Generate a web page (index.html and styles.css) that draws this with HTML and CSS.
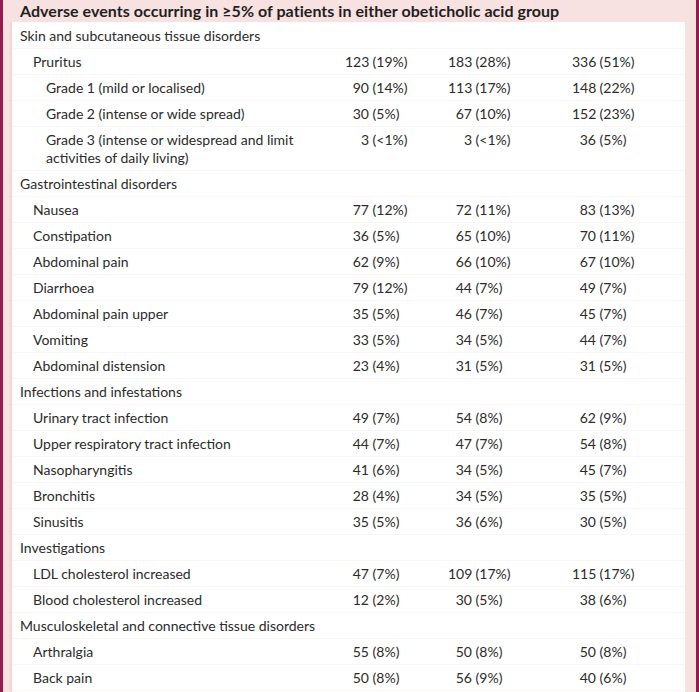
FILE: index.html
```html
<!DOCTYPE html>
<html lang="en">
<head>
    <meta charset="UTF-8">
    <meta name="viewport" content="width=device-width, initial-scale=1.0">
    <title>Adverse events</title>
    <link rel="stylesheet" href="styles.css">
</head>
<body>
    <div class="frame">
        <h1 class="caption">Adverse events occurring in ≥5% of patients in either obeticholic acid group</h1>
        <div class="panel">
            <table class="events">
                <colgroup>
                    <col class="col-label">
                    <col class="col-a">
                    <col class="col-b">
                    <col class="col-c">
                </colgroup>
                <tbody>
                    <tr class="group"><td colspan="4">Skin and subcutaneous tissue disorders</td></tr>
                    <tr>
                        <td class="lvl1">Pruritus</td>
                        <td><span class="n">123</span> (19%)</td>
                        <td><span class="n">183</span> (28%)</td>
                        <td><span class="n">336</span> (51%)</td>
                    </tr>
                    <tr>
                        <td class="lvl2">Grade 1 (mild or localised)</td>
                        <td><span class="n">90</span> (14%)</td>
                        <td><span class="n">113</span> (17%)</td>
                        <td><span class="n">148</span> (22%)</td>
                    </tr>
                    <tr>
                        <td class="lvl2">Grade 2 (intense or wide spread)</td>
                        <td><span class="n">30</span> (5%)</td>
                        <td><span class="n">67</span> (10%)</td>
                        <td><span class="n">152</span> (23%)</td>
                    </tr>
                    <tr>
                        <td class="lvl2">Grade 3 (intense or widespread and limit<br>activities of daily living)</td>
                        <td><span class="n">3</span> (&lt;1%)</td>
                        <td><span class="n">3</span> (&lt;1%)</td>
                        <td><span class="n">36</span> (5%)</td>
                    </tr>

                    <tr class="group"><td colspan="4">Gastrointestinal disorders</td></tr>
                    <tr>
                        <td class="lvl1">Nausea</td>
                        <td><span class="n">77</span> (12%)</td>
                        <td><span class="n">72</span> (11%)</td>
                        <td><span class="n">83</span> (13%)</td>
                    </tr>
                    <tr>
                        <td class="lvl1">Constipation</td>
                        <td><span class="n">36</span> (5%)</td>
                        <td><span class="n">65</span> (10%)</td>
                        <td><span class="n">70</span> (11%)</td>
                    </tr>
                    <tr>
                        <td class="lvl1">Abdominal pain</td>
                        <td><span class="n">62</span> (9%)</td>
                        <td><span class="n">66</span> (10%)</td>
                        <td><span class="n">67</span> (10%)</td>
                    </tr>
                    <tr>
                        <td class="lvl1">Diarrhoea</td>
                        <td><span class="n">79</span> (12%)</td>
                        <td><span class="n">44</span> (7%)</td>
                        <td><span class="n">49</span> (7%)</td>
                    </tr>
                    <tr>
                        <td class="lvl1">Abdominal pain upper</td>
                        <td><span class="n">35</span> (5%)</td>
                        <td><span class="n">46</span> (7%)</td>
                        <td><span class="n">45</span> (7%)</td>
                    </tr>
                    <tr>
                        <td class="lvl1">Vomiting</td>
                        <td><span class="n">33</span> (5%)</td>
                        <td><span class="n">34</span> (5%)</td>
                        <td><span class="n">44</span> (7%)</td>
                    </tr>
                    <tr>
                        <td class="lvl1">Abdominal distension</td>
                        <td><span class="n">23</span> (4%)</td>
                        <td><span class="n">31</span> (5%)</td>
                        <td><span class="n">31</span> (5%)</td>
                    </tr>

                    <tr class="group"><td colspan="4">Infections and infestations</td></tr>
                    <tr>
                        <td class="lvl1">Urinary tract infection</td>
                        <td><span class="n">49</span> (7%)</td>
                        <td><span class="n">54</span> (8%)</td>
                        <td><span class="n">62</span> (9%)</td>
                    </tr>
                    <tr>
                        <td class="lvl1">Upper respiratory tract infection</td>
                        <td><span class="n">44</span> (7%)</td>
                        <td><span class="n">47</span> (7%)</td>
                        <td><span class="n">54</span> (8%)</td>
                    </tr>
                    <tr>
                        <td class="lvl1">Nasopharyngitis</td>
                        <td><span class="n">41</span> (6%)</td>
                        <td><span class="n">34</span> (5%)</td>
                        <td><span class="n">45</span> (7%)</td>
                    </tr>
                    <tr>
                        <td class="lvl1">Bronchitis</td>
                        <td><span class="n">28</span> (4%)</td>
                        <td><span class="n">34</span> (5%)</td>
                        <td><span class="n">35</span> (5%)</td>
                    </tr>
                    <tr>
                        <td class="lvl1">Sinusitis</td>
                        <td><span class="n">35</span> (5%)</td>
                        <td><span class="n">36</span> (6%)</td>
                        <td><span class="n">30</span> (5%)</td>
                    </tr>

                    <tr class="group"><td colspan="4">Investigations</td></tr>
                    <tr>
                        <td class="lvl1">LDL cholesterol increased</td>
                        <td><span class="n">47</span> (7%)</td>
                        <td><span class="n">109</span> (17%)</td>
                        <td><span class="n">115</span> (17%)</td>
                    </tr>
                    <tr>
                        <td class="lvl1">Blood cholesterol increased</td>
                        <td><span class="n">12</span> (2%)</td>
                        <td><span class="n">30</span> (5%)</td>
                        <td><span class="n">38</span> (6%)</td>
                    </tr>

                    <tr class="group"><td colspan="4">Musculoskeletal and connective tissue disorders</td></tr>
                    <tr>
                        <td class="lvl1">Arthralgia</td>
                        <td><span class="n">55</span> (8%)</td>
                        <td><span class="n">50</span> (8%)</td>
                        <td><span class="n">50</span> (8%)</td>
                    </tr>
                    <tr>
                        <td class="lvl1">Back pain</td>
                        <td><span class="n">50</span> (8%)</td>
                        <td><span class="n">56</span> (9%)</td>
                        <td><span class="n">40</span> (6%)</td>
                    </tr>
                </tbody>
            </table>
        </div>
    </div>
</body>
</html>
```

FILE: styles.css
```css
* {
    margin: 0;
    padding: 0;
    box-sizing: border-box;
}

body {
    font-family: Lato, "Liberation Sans", sans-serif;
    color: #2b2b2b;
    background: #f7e1e1;
    overflow: hidden;
}

.frame {
    width: 699px;
    height: 692px;
    background: #f7e1e1;
    border-left: 3px solid #8e1f4c;
    border-right: 3px solid #8e1f4c;
    padding: 0 11px 0 9px;
}

.caption {
    font-size: 16px;
    font-weight: bold;
    line-height: 22px;
    padding-left: 8px;
    color: #1f1f1f;
    letter-spacing: 0.05px;
    white-space: nowrap;
}

.panel {
    background: #fff;
    height: 670px;
    padding-top: 1px;
    box-shadow: -2px 0 0 #f2d6d6;
}

.events {
    width: 100%;
    border-collapse: collapse;
    table-layout: fixed;
    font-size: 14px;
    font-weight: 400;
}

.col-label { width: 333px; }
.col-a { width: 103px; }
.col-b { width: 124px; }

.events td {
    line-height: 18px;
    padding: 4px 0 3px;
    vertical-align: top;
    border-bottom: 1px solid #faf6f6;
    white-space: nowrap;
}

.group td {
    padding-left: 8px;
}

.events td.lvl1 {
    padding-left: 21px;
}

.events td.lvl2 {
    padding-left: 34px;
}

.n {
    display: inline-block;
    width: 24px;
    text-align: right;
}
```
